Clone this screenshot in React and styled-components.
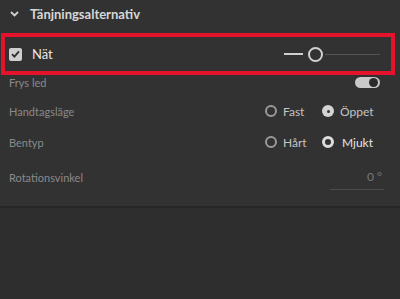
import React from "react";
import styled, { createGlobalStyle } from "styled-components";

const Global = createGlobalStyle`
  html, body { margin: 0; padding: 0; background: #2e2e2e; }
  body { font-family: Lato, "Noto Sans", sans-serif; }
`;

const Page = styled.div`
  width: 400px;
  height: 299px;
  display: flex;
  flex-direction: column;
  background: #2e2e2e;
`;

const Panel = styled.div`
  background: #323232;
  border-bottom: 2px solid #262626;
  padding-bottom: 12px;
  display: flex;
  flex-direction: column;
`;

const Header = styled.div`
  height: 28px;
  display: flex;
  align-items: center;
  padding-left: 10px;
  gap: 11px;
  color: #d8d8d8;
  font-weight: 700;
  font-size: 13px;
`;

const Highlight = styled.div`
  margin: 5px 5px 0 1px;
  height: 34px;
  border: 4px solid #e5122b;
  display: flex;
  align-items: center;
  padding: 0 11px 0 4px;
`;

const CheckBox = styled.span`
  width: 13px;
  height: 13px;
  border-radius: 2px;
  background: #cfcfcf;
  display: flex;
  align-items: center;
  justify-content: center;
`;

const CheckLabel = styled.span`
  margin-left: 10px;
  color: #e8e8e8;
  font-size: 13px;
`;

const Slider = styled.div`
  margin-left: auto;
  width: 96px;
  height: 16px;
  display: flex;
  align-items: center;
`;

const TrackFill = styled.span`
  width: 19px;
  height: 2px;
  background: #cfcfcf;
`;

const Thumb = styled.span`
  width: 11px;
  height: 11px;
  border-radius: 50%;
  border: 2px solid #d0d0d0;
  background: #323232;
  margin: 0 2px 0 5px;
`;

const Track = styled.span`
  flex: 1;
  height: 1px;
  background: #555;
`;

const Row = styled.div`
  height: ${(p) => p.$h}px;
  margin-top: ${(p) => p.$mt || 0}px;
  display: flex;
  align-items: center;
  padding: 0 18px 0 9px;
`;

const Label = styled.span`
  color: #8a8a8a;
  font-size: 11px;
`;

const Toggle = styled.span`
  margin-left: auto;
  margin-right: 2px;
  width: 25px;
  height: 11px;
  border-radius: 6px;
  background: #c9c9c9;
  display: flex;
  align-items: center;
  justify-content: flex-end;
  padding-right: 2px;
  box-sizing: border-box;
`;

const Knob = styled.span`
  width: 9px;
  height: 9px;
  border-radius: 50%;
  background: #2c2c2c;
`;

const RadioGroup = styled.div`
  margin-left: auto;
  margin-right: -3px;
  width: 120px;
  display: grid;
  grid-template-columns: 57px 1fr;
  align-items: center;
`;

const Option = styled.span`
  display: flex;
  align-items: center;
  gap: ${(p) => (p.$wide ? 8 : 6)}px;
  color: ${(p) => (p.$on ? "#e4e4e4" : "#c4c4c4")};
  font-size: 12px;
`;

const Ring = styled.span`
  width: 12px;
  height: 12px;
  border-radius: 50%;
  box-sizing: border-box;
  flex: none;
  border: ${(p) =>
    p.$variant === "thick" ? "3px solid #dcdcdc" : p.$variant === "fill" ? "none" : "2px solid #9a9a9a"};
  background: ${(p) => (p.$variant === "fill" ? "#d4d4d4" : "transparent")};
  display: flex;
  align-items: center;
  justify-content: center;
`;

const Dot = styled.span`
  width: 3px;
  height: 3px;
  border-radius: 50%;
  background: #333;
`;

const NumberField = styled.div`
  margin-left: auto;
  margin-right: -2px;
  width: 54px;
  height: 24px;
  border-bottom: 1px solid #4c4c4c;
  display: flex;
  justify-content: flex-end;
  align-items: flex-start;
  color: #777;
  font-size: 12px;
  padding: 3px 2px 0 0;
  box-sizing: border-box;
  margin-top: 2px;
`;

const Radio = ({ variant, label, on, wide }) => (
  <Option $on={on} $wide={wide}>
    <Ring $variant={variant}>{variant === "fill" && <Dot />}</Ring>
    {label}
  </Option>
);

export default function App() {
  return (
    <Page>
      <Global />
      <Panel>
        <Header>
          <svg width="9" height="6" viewBox="0 0 9 6">
            <path d="M1 1l3.5 3.5L8 1" fill="none" stroke="#d0d0d0" strokeWidth="1.8" />
          </svg>
          Tänjningsalternativ
        </Header>
        <Highlight>
          <CheckBox>
            <svg width="9" height="8" viewBox="0 0 9 8">
              <path d="M1 4.2l2.4 2.4L8 1.3" fill="none" stroke="#2e2e2e" strokeWidth="1.8" />
            </svg>
          </CheckBox>
          <CheckLabel>Nät</CheckLabel>
          <Slider>
            <TrackFill />
            <Thumb />
            <Track />
          </Slider>
        </Highlight>
        <Row $h={14}>
          <Label>Frys led</Label>
          <Toggle>
            <Knob />
          </Toggle>
        </Row>
        <Row $h={30} $mt={7}>
          <Label>Handtagsläge</Label>
          <RadioGroup>
            <Radio variant="off" label="Fast" />
            <Radio variant="fill" label="Öppet" />
          </RadioGroup>
        </Row>
        <Row $h={30} $mt={1}>
          <Label>Bentyp</Label>
          <RadioGroup>
            <Radio variant="off" label="Hårt" />
            <Radio variant="thick" label="Mjukt" on wide />
          </RadioGroup>
        </Row>
        <Row $h={34} $mt={3}>
          <Label>Rotationsvinkel</Label>
          <NumberField>0 °</NumberField>
        </Row>
      </Panel>
    </Page>
  );
}
